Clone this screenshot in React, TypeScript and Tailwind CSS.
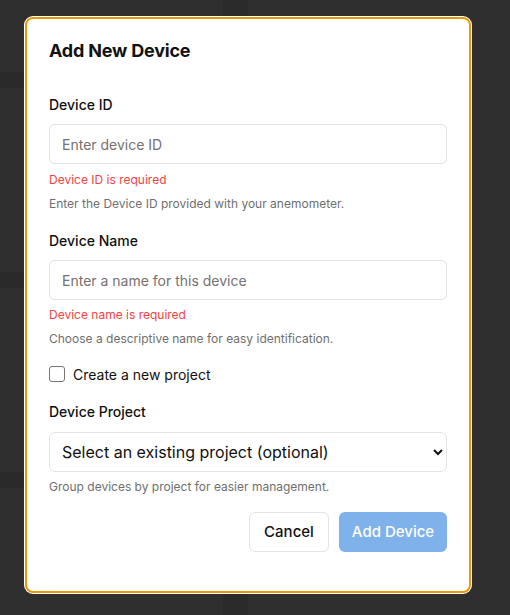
import React from 'react';

const font = { fontFamily: 'Inter, "Liberation Sans", sans-serif' };

const Field: React.FC<{ label: string; placeholder: string; error: string; help: string; first?: boolean }> = ({ label, placeholder, error, help, first }) => (
  <div className={first ? 'mt-[32px]' : 'mt-[19px]'}>
    <label className="block text-[14px] leading-5 font-medium text-[#111]">{label}</label>
    <input
      placeholder={placeholder}
      className="mt-[9px] block w-full h-10 px-[12px] rounded-md border border-[#e3e3e3] bg-white text-[14px] text-[#222] placeholder:text-[#767070] outline-none"
    />
    <p className={(first ? 'mt-[7px]' : 'mt-[6px]') + ' text-[12px] leading-[18px] text-[#ef4444]'}>{error}</p>
    <p className="mt-[7px] text-[12px] leading-4 text-[#6f6f6f]">{help}</p>
  </div>
);

export default function App() {
  return (
    <div className="relative min-h-[615px] bg-[#2f2f2f] overflow-hidden" style={font}>
      {/* page behind the dialog */}
      <div className="flex h-[615px]">
        <div className="w-[223px] flex flex-col">
          <div className="h-[72px]" />
          <div className="h-4 bg-[#2a2a2a]" />
          <div className="h-[184px]" />
          <div className="h-4 bg-[#2a2a2a]" />
          <div className="h-[184px]" />
          <div className="h-4 bg-[#2a2a2a]" />
        </div>
        <div className="w-[25px] bg-[#2b2b2b]" />
        <div className="flex-1" />
      </div>

      {/* dialog */}
      <div className="absolute inset-0 pt-[17px] pl-[25px]">
        <div className="w-[446px] h-[576px] bg-white rounded-lg border-2 border-[#e69a05] ring-1 ring-white px-[22px] pt-[20px]">
          <h2 className="text-[18px] leading-6 font-bold text-[#111] tracking-[-0.2px]">Add New Device</h2>

          <Field first label="Device ID" placeholder="Enter device ID" error="Device ID is required" help="Enter the Device ID provided with your anemometer." />
          <Field label="Device Name" placeholder="Enter a name for this device" error="Device name is required" help="Choose a descriptive name for easy identification." />

          <label className="mt-[17px] flex items-center gap-2 h-5">
            <span className="w-4 h-4 rounded-[3px] border border-[#767676] bg-white" />
            <span className="text-[14px] text-[#111]">Create a new project</span>
          </label>

          <div className="mt-[18px]">
            <label className="block text-[14px] leading-5 font-medium text-[#111]">Device Project</label>
            <select className="mt-[10px] block w-full h-10 px-[8px] rounded-md border border-[#e3e3e3] bg-white text-[16px] text-[#111]">
              <option>Select an existing project (optional)</option>
            </select>
            <p className="mt-[7px] text-[12px] leading-4 text-[#6f6f6f]">Group devices by project for easier management.</p>
          </div>

          <div className="mt-[17px] flex justify-end gap-[10px]">
            <button className="h-10 w-20 rounded-md border border-[#e3e3e3] bg-white text-[15px] font-medium text-[#111]">Cancel</button>
            <button disabled className="h-10 w-[108px] rounded-md bg-[#7fb2ea] text-[15px] font-medium text-white">Add Device</button>
          </div>
        </div>
      </div>
    </div>
  );
}
